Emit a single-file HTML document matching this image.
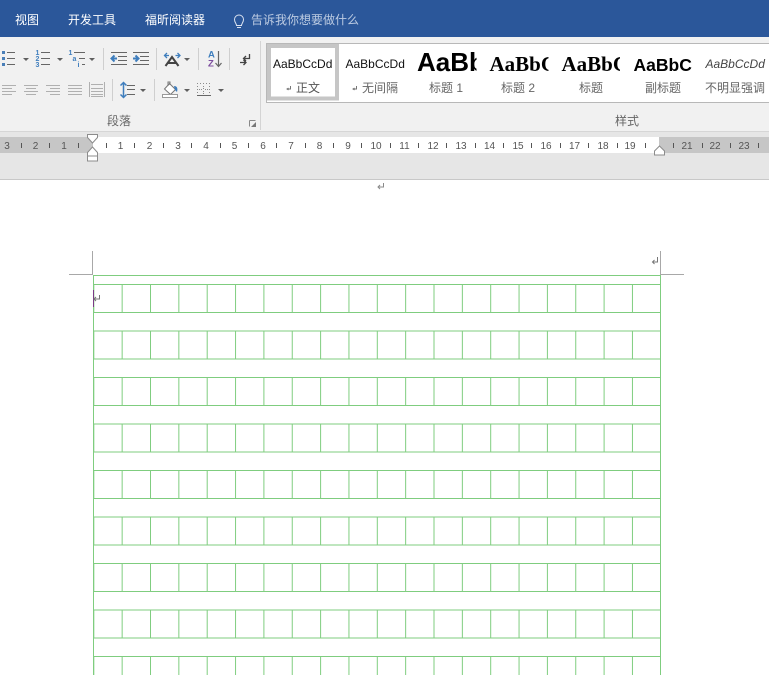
<!DOCTYPE html>
<html><head><meta charset="utf-8">
<style>
html,body{margin:0;padding:0;background:#fff;}
body{width:769px;height:675px;overflow:hidden;position:relative;font-family:"Liberation Sans","Noto Sans CJK SC",sans-serif;}
svg{position:absolute;left:0;top:0;}
</style></head>
<body>
<svg width="769" height="675" viewBox="0 0 769 675" xmlns="http://www.w3.org/2000/svg" font-family="'Liberation Sans','Noto Sans CJK SC',sans-serif">
<defs>
<pattern id="cell" x="93.3" y="284" width="28.35" height="46.5" patternUnits="userSpaceOnUse">
<rect x="0" y="0" width="1" height="28" fill="#7fcd7f"/>
</pattern>
<pattern id="rows" x="0" y="284" width="769" height="46.5" patternUnits="userSpaceOnUse">
<rect x="0" y="0" width="769" height="1" fill="#7fcd7f"/>
<rect x="0" y="28" width="769" height="1" fill="#7fcd7f"/>
</pattern>
<clipPath id="c3"><rect x="410" y="44" width="66.5" height="40"/></clipPath>
<clipPath id="c4"><rect x="485" y="44" width="63.5" height="40"/></clipPath>
<clipPath id="c5"><rect x="555" y="44" width="65" height="40"/></clipPath>
<clipPath id="c6"><rect x="628" y="44" width="64" height="40"/></clipPath>
<clipPath id="c7"><rect x="700" y="44" width="69" height="40"/></clipPath>
</defs>

<!-- title bar -->
<rect width="769" height="37" fill="#2b579a"/>
<g font-size="12" fill="#fff">
<text x="15" y="24">视图</text>
<text x="68" y="24">开发工具</text>
<text x="145" y="24">福昕阅读器</text>
<text x="251" y="24" fill="#bccbe2">告诉我你想要做什么</text>
</g>
<g fill="none" stroke="#dbe3f0" stroke-width="1">
<path d="M236.500 25.500c0-2-2-3-2-6a4.500 4.500 0 0 1 9 0c0 3-2 4-2 6z"/>
<path d="M237 27.500h4"/>
</g>

<!-- ribbon -->
<rect y="37" width="769" height="94" fill="#f1f1f1"/>
<rect y="131" width="769" height="1" fill="#d6d6d6"/>
<rect x="260" y="41" width="1" height="89" fill="#d4d4d4"/>

<g shape-rendering="crispEdges">
<!-- row 1 list lines -->
<g fill="#666">
<rect x="7" y="52" width="8" height="1"/><rect x="7" y="58" width="8" height="1"/><rect x="7" y="64" width="8" height="1"/>
<rect x="41" y="52" width="9" height="1"/><rect x="41" y="58" width="9" height="1"/><rect x="41" y="64" width="9" height="1"/>
<rect x="74" y="52" width="11" height="1"/><rect x="79" y="58" width="6" height="1"/><rect x="82" y="64" width="3" height="1"/>
</g>
<g fill="#4a7fb8">
<rect x="2" y="51" width="3" height="3"/><rect x="2" y="57" width="3" height="3"/><rect x="2" y="63" width="3" height="3"/>
</g>
<!-- indent lines -->
<g fill="#666">
<rect x="111" y="52" width="16" height="1"/><rect x="118" y="56" width="9" height="1"/><rect x="118" y="60" width="9" height="1"/><rect x="111" y="64" width="16" height="1"/>
<rect x="133" y="52" width="16" height="1"/><rect x="140" y="56" width="9" height="1"/><rect x="140" y="60" width="9" height="1"/><rect x="133" y="64" width="16" height="1"/>
</g>
<g fill="#cfcfcf">
<rect x="103" y="48" width="1" height="22"/><rect x="156" y="48" width="1" height="22"/><rect x="198" y="48" width="1" height="22"/><rect x="229" y="48" width="1" height="22"/>
<rect x="112" y="79" width="1" height="22"/><rect x="154" y="79" width="1" height="22"/>
</g>
<!-- row 2 alignment -->
<g fill="#b0b0b0">
<rect x="2" y="85" width="14" height="1"/><rect x="2" y="88" width="10" height="1"/><rect x="2" y="91" width="14" height="1"/><rect x="2" y="94" width="10" height="1"/>
<rect x="24" y="85" width="14" height="1"/><rect x="26" y="88" width="10" height="1"/><rect x="24" y="91" width="14" height="1"/><rect x="26" y="94" width="10" height="1"/>
<rect x="46" y="85" width="14" height="1"/><rect x="50" y="88" width="10" height="1"/><rect x="46" y="91" width="14" height="1"/><rect x="50" y="94" width="10" height="1"/>
<rect x="68" y="85" width="14" height="1"/><rect x="68" y="88" width="14" height="1"/><rect x="68" y="91" width="14" height="1"/><rect x="68" y="94" width="14" height="1"/>
<rect x="89" y="82" width="1" height="15"/><rect x="104" y="82" width="1" height="15"/>
<rect x="91" y="84" width="12" height="1"/>
<rect x="91" y="88" width="12" height="1"/><rect x="91" y="91" width="12" height="1"/><rect x="91" y="94" width="12" height="1"/><rect x="91" y="96" width="12" height="1"/>
</g>
<!-- line spacing lines -->
<g fill="#666">
<rect x="127" y="85" width="8" height="1"/><rect x="127" y="89" width="8" height="1"/><rect x="127" y="94" width="8" height="1"/>
</g>
<!-- borders grid -->
<g fill="#8a8a8a">
<rect x="197" y="95" width="14" height="1" fill="#666"/>
<rect x="197" y="83" width="1" height="1"/><rect x="200" y="83" width="1" height="1"/><rect x="203" y="83" width="1" height="1"/><rect x="206" y="83" width="1" height="1"/><rect x="209" y="83" width="1" height="1"/>
<rect x="197" y="86" width="1" height="1"/><rect x="197" y="89" width="1" height="1"/><rect x="197" y="92" width="1" height="1"/>
<rect x="203" y="86" width="1" height="1"/><rect x="203" y="88" width="1" height="1"/><rect x="203" y="91" width="1" height="1"/><rect x="203" y="93" width="1" height="1"/>
<rect x="209" y="86" width="1" height="1"/><rect x="209" y="89" width="1" height="1"/><rect x="209" y="92" width="1" height="1"/>
<rect x="199" y="89" width="1" height="1"/><rect x="201" y="89" width="1" height="1"/><rect x="205" y="89" width="1" height="1"/><rect x="207" y="89" width="1" height="1"/>
</g>
</g>

<!-- list numerals -->
<g font-size="7" font-weight="700" fill="#3f7ebd" text-anchor="middle">
<text x="37.500" y="55">1</text><text x="37.500" y="61">2</text><text x="37.500" y="67">3</text>
<text x="70.500" y="55">1</text><text x="74.500" y="61">a</text><text x="78.500" y="67">i</text>
</g>

<!-- dropdown arrows -->
<g fill="#5f5f5f">
<path d="M23 58h6l-3 3z"/><path d="M57 58h6l-3 3z"/><path d="M89 58h6l-3 3z"/>
<path d="M184 58h6l-3 3z"/><path d="M140 89h6l-3 3z"/><path d="M184 89h6l-3 3z"/><path d="M218 89h6l-3 3z"/>
</g>

<!-- icon arrows -->
<g fill="none" stroke="#3f7ebd">
<path d="M117 58.500h-5M114.500 55.500l-3 3 3 3" stroke-width="2"/>
<path d="M133 58.500h5M135.500 55.500l3 3-3 3" stroke-width="2"/>
<path d="M123.500 83v14M120.500 85.500l3-3 3 3M120.500 94.500l3 3 3-3" stroke-width="1.500"/>
<path d="M169 55.500h-4M167 53l-2.500 2.500 2.500 2.500M175.500 55.500h4M177.500 53l2.500 2.500-2.500 2.500" stroke-width="1.300"/>
</g>
<!-- text direction A -->
<path d="M165.500 66l6.500-9 6.500 9M168 63h8" fill="none" stroke="#444" stroke-width="2"/>
<!-- sort AZ -->
<text x="208" y="57.500" font-size="9.500" font-weight="700" fill="#3f7ebd">A</text>
<text x="208" y="66.500" font-size="9.500" font-weight="700" fill="#7d4e9f">Z</text>
<path d="M218.500 51v15M215.500 63l3 3.500 3-3.500" fill="none" stroke="#666" stroke-width="1.200"/>
<!-- direction marks -->
<path d="M249.500 54v4.500h-6M246 56l-2.500 2.500 2.500 2.500M240 62.500h5.500M243.500 60l2.500 2.500-2.500 2.500" fill="none" stroke="#444" stroke-width="1.300"/>
<!-- shading bucket -->
<path d="M164.500 89l5-5.500 6 6-5 5z" fill="#fff" stroke="#777" stroke-width="1"/>
<path d="M168 86v-4h2v3" fill="none" stroke="#777" stroke-width="1"/>
<path d="M174 86c3 0 4 2 3 6l-2-2z" fill="#3f7ebd"/>
<rect x="162.500" y="94.500" width="15" height="3" fill="#fff" stroke="#999"/>

<!-- group labels -->
<text x="107" y="125" font-size="12" fill="#666">段落</text>
<text x="615" y="125" font-size="12" fill="#666">样式</text>
<path d="M249.500 120.500h6M249.500 120.500v6" fill="none" stroke="#888" shape-rendering="crispEdges"/>
<path d="M256 127h-5l5-5z" fill="#777"/>

<!-- styles gallery -->
<rect x="266.500" y="43.500" width="503" height="59" fill="#fff" stroke="#b8b8b8"/>
<rect x="269" y="46" width="68" height="52.500" fill="#fff" stroke="#c6c6c6" stroke-width="4"/>
<g font-size="12" fill="#111">
<text x="273" y="68">AaBbCcDd</text>
<text x="345.500" y="68">AaBbCcDd</text>
</g>
<text x="417" y="71" font-size="26" font-weight="700" fill="#000" clip-path="url(#c3)">AaBbCc</text>
<text x="489.500" y="71" font-size="21" font-weight="700" font-family="'Liberation Serif',serif" fill="#000" clip-path="url(#c4)">AaBbCc</text>
<text x="561.500" y="71" font-size="21" font-weight="700" font-family="'Liberation Serif',serif" fill="#000" clip-path="url(#c5)">AaBbCc</text>
<text x="633.500" y="71" font-size="17.500" font-weight="700" fill="#000" clip-path="url(#c6)">AaBbCcDd</text>
<text x="705.500" y="68" font-size="12" font-style="italic" fill="#444" clip-path="url(#c7)">AaBbCcDd</text>
<g font-size="12" fill="#666">
<text x="296" y="92" fill="#555">正文</text>
<text x="362" y="92">无间隔</text>
<text x="429" y="92">标题 1</text>
<text x="501" y="92">标题 2</text>
<text x="579" y="92">标题</text>
<text x="645" y="92">副标题</text>
<text x="705" y="92">不明显强调</text>
</g>
<g fill="none" stroke="#777" stroke-width="1">
<path d="M290.500 86v3h-3M288.500 88l-1.500 1 1.500 1"/>
<path d="M356.500 86v3h-3M354.500 88l-1.500 1 1.500 1"/>
</g>

<!-- ruler band -->
<rect y="132" width="769" height="48" fill="#e6e6e6"/>
<rect y="179" width="769" height="1" fill="#c8c8c8"/>
<rect y="137" width="769" height="16" fill="#c6c6c6"/>
<rect x="93" y="137" width="566" height="16" fill="#fff"/>
<g fill="#555" shape-rendering="crispEdges">
<rect x="21" y="143" width="1" height="5"/><rect x="49" y="143" width="1" height="5"/><rect x="78" y="143" width="1" height="5"/>
<rect x="106" y="143" width="1" height="5"/><rect x="134" y="143" width="1" height="5"/><rect x="163" y="143" width="1" height="5"/><rect x="191" y="143" width="1" height="5"/><rect x="220" y="143" width="1" height="5"/><rect x="248" y="143" width="1" height="5"/><rect x="276" y="143" width="1" height="5"/><rect x="305" y="143" width="1" height="5"/><rect x="333" y="143" width="1" height="5"/><rect x="361" y="143" width="1" height="5"/><rect x="390" y="143" width="1" height="5"/><rect x="418" y="143" width="1" height="5"/><rect x="446" y="143" width="1" height="5"/><rect x="475" y="143" width="1" height="5"/><rect x="503" y="143" width="1" height="5"/><rect x="531" y="143" width="1" height="5"/><rect x="560" y="143" width="1" height="5"/><rect x="588" y="143" width="1" height="5"/><rect x="617" y="143" width="1" height="5"/><rect x="645" y="143" width="1" height="5"/><rect x="673" y="143" width="1" height="5"/><rect x="702" y="143" width="1" height="5"/><rect x="730" y="143" width="1" height="5"/><rect x="758" y="143" width="1" height="5"/>
</g>
<g font-size="10" fill="#555" text-anchor="middle">
<text x="7" y="149">3</text><text x="35.500" y="149">2</text><text x="64" y="149">1</text>
<text x="120.500" y="149">1</text><text x="149.500" y="149">2</text><text x="178" y="149">3</text><text x="206" y="149">4</text><text x="234.500" y="149">5</text><text x="263" y="149">6</text><text x="291" y="149">7</text><text x="319.500" y="149">8</text><text x="348" y="149">9</text><text x="376" y="149">10</text><text x="404.500" y="149">11</text><text x="433" y="149">12</text><text x="461" y="149">13</text><text x="489.500" y="149">14</text><text x="518" y="149">15</text><text x="546" y="149">16</text><text x="574.500" y="149">17</text><text x="603" y="149">18</text><text x="630" y="149">19</text><text x="687" y="149">21</text><text x="715" y="149">22</text><text x="744" y="149">23</text>
</g>
<!-- ruler markers -->
<g fill="#fff" stroke="#8c8c8c" stroke-width="1">
<path d="M87.500 134.500h10v3l-5 5.500-5-5.500z"/>
<path d="M92.500 147l5 5.500v3.500h-10v-3.500z"/>
<rect x="87.500" y="156" width="10" height="5"/>
<path d="M659.500 146l5 5v4h-10v-4z"/>
</g>

<!-- document -->
<path d="M383.500 183v4h-5M380 185l-2 2 2 2" fill="none" stroke="#8a8a8a"/>

<g fill="#a8a8a8" shape-rendering="crispEdges">
<rect x="92" y="251" width="1" height="24"/>
<rect x="69" y="274" width="24" height="1"/>
<rect x="660" y="251" width="1" height="24"/>
<rect x="660" y="274" width="24" height="1"/>
</g>
<path d="M657.500 257v5h-5M654.500 260l-2 2 2 2" fill="none" stroke="#777"/>

<g shape-rendering="crispEdges">
<rect x="93" y="275" width="568" height="1" fill="#7fcd7f"/>
<rect x="93" y="284" width="568" height="391" fill="url(#cell)"/>
<rect x="93" y="284" width="568" height="391" fill="url(#rows)"/>
<rect x="93" y="275" width="1" height="400" fill="#7fcd7f"/>
<rect x="660" y="275" width="1" height="400" fill="#7fcd7f"/>
<rect x="93" y="290" width="1" height="17" fill="#7b3a86"/>
</g>
<path d="M99.500 295v4h-5M96 297l-2 2 2 2" fill="none" stroke="#777"/>
</svg>
</body></html>
